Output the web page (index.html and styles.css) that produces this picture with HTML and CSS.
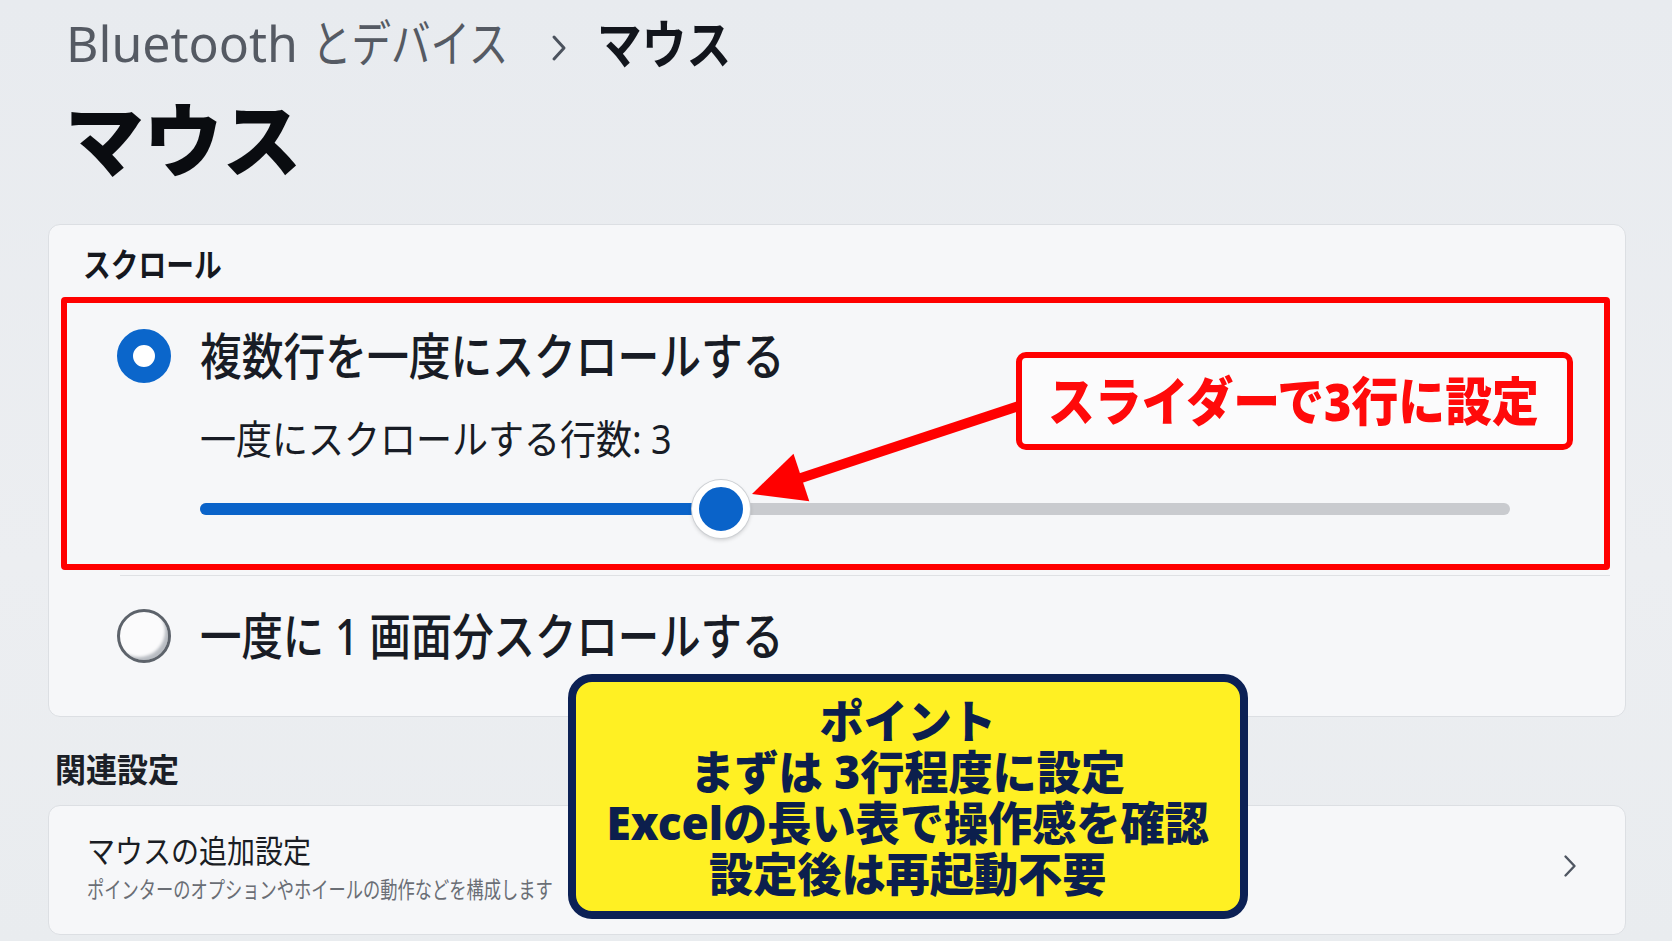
FILE: index.html
```html
<!DOCTYPE html>
<html lang="ja">
<head>
<meta charset="utf-8">
<title>マウス</title>
<link rel="stylesheet" href="styles.css">
</head>
<body>
<div class="page">
  <div class="crumb">
    <span class="crumb-en">Bluetooth</span>
    <span class="crumb-jp">とデバイス</span>
    <svg class="crumb-chev" width="16" height="28" viewBox="0 0 16 28"><path d="M3 3 L13 14 L3 25" fill="none" stroke="#4b525d" stroke-width="3" stroke-linecap="round" stroke-linejoin="round"/></svg>
    <span class="crumb-cur">マウス</span>
  </div>
  <h1 class="title"><span class="title-txt">マウス</span></h1>

  <section class="card card-scroll">
    <div class="card-head"><span class="card-head-txt">スクロール</span></div>
    <div class="hilite">
      <div class="opt">
        <span class="radio radio-on"></span>
        <span class="opt-text">複数行を一度にスクロールする</span>
      </div>
      <div class="sub"><span class="sub-txt">一度にスクロールする行数: 3</span></div>
      <div class="slider">
        <div class="track"><div class="fill"></div></div>
        <div class="thumb"></div>
      </div>
    </div>
    <div class="divider"></div>
    <div class="opt opt2">
      <span class="radio radio-off"></span>
      <span class="opt-text">一度に 1 画面分スクロールする</span>
    </div>
  </section>

  <h2 class="related"><span class="related-txt">関連設定</span></h2>
  <section class="card card-link">
    <div class="link-text">
      <div class="link-title"><span class="link-title-txt">マウスの追加設定</span></div>
      <div class="link-desc"><span class="link-desc-txt">ポインターのオプションやホイールの動作などを構成します</span></div>
    </div>
    <svg class="link-chev" width="14" height="24" viewBox="0 0 14 24"><path d="M2.5 2.5 L11.5 12 L2.5 21.5" fill="none" stroke="#4f5662" stroke-width="2.4" stroke-linecap="round" stroke-linejoin="round"/></svg>
  </section>

  <svg class="arrow" width="1672" height="941" viewBox="0 0 1672 941">
    <line x1="798" y1="479" x2="1022" y2="405" stroke="#ff0000" stroke-width="10"/>
    <polygon points="752,494 793.5,453.7 809.3,501.3" fill="#ff0000"/>
  </svg>
  <div class="note-red"><span class="note-red-txt">スライダーで3行に設定</span></div>
  <div class="note-yellow">
    <p class="ny-text">ポイント<br>まずは 3行程度に設定<br>Excelの長い表で操作感を確認<br>設定後は再起動不要</p>
  </div>
</div>
</body>
</html>
```

FILE: styles.css
```css
* { box-sizing: border-box; }
html, body {
  margin: 0;
  padding: 0;
}
body {
  width: 1672px;
  height: 941px;
  overflow: hidden;
  background: #e9ecf0;
  font-family: "Noto Sans", "Noto Sans CJK JP", sans-serif;
  color: #191d26;
}
.page {
  position: relative;
  width: 1672px;
  height: 941px;
  padding: 18px 46px 0 48px;
  background: linear-gradient(180deg, #e8ebef 0%, #eceef1 60%, #e9ecef 100%);
}

/* breadcrumb */
.crumb {
  display: flex;
  align-items: flex-start;
  height: 52px;
  padding-left: 18px;
  line-height: 1;
  white-space: nowrap;
}
.crumb-en {
  font-size: 50px;
  color: #555a63;
  margin-right: 14px;
}
.crumb-jp {
  display: inline-block;
  font-size: 50px;
  color: #555a63;
  transform: scaleX(0.79);
  transform-origin: 0 50%;
  margin-right: -10px;
}
.crumb-chev {
  margin-top: 16px;
  margin-right: 30px;
  flex: none;
}
.crumb-cur {
  display: inline-block;
  font-size: 52px;
  font-weight: 700;
  color: #12151c;
  transform: scaleX(0.86);
  transform-origin: 0 50%;
}

/* title */
.title {
  margin: 28.5px 0 0 0;
  padding-left: 17px;
  font-size: 80px;
  font-weight: 900;
  line-height: 1;
  color: #0a0c10;
}
.title-txt {
  display: inline-block;
  transform: scaleX(0.985);
  transform-origin: 0 50%;
}

/* cards */
.card {
  background: #f6f7f9;
  border: 1px solid #dcdfe3;
  border-radius: 12px;
}
.card-scroll {
  margin-top: 45.5px;
  padding: 22.5px 0 53px 0;
}
.card-head {
  padding-left: 34px;
  font-size: 33px;
  font-weight: 700;
  line-height: 1;
  height: 33px;
  color: #15181f;
}
.card-head-txt, .sub-txt, .related-txt, .link-title-txt, .link-desc-txt, .note-red-txt {
  display: inline-block;
  white-space: nowrap;
  transform-origin: 0 50%;
}
.card-head-txt { transform: scaleX(0.84); }

.hilite {
  margin: 16.5px 15px 0 12px;
  border: 6px solid #ff0000;
  border-radius: 4px;
  padding: 26px 94px 26px 50px;
}
.opt {
  display: flex;
  align-items: center;
  height: 54px;
}
.opt-text {
  display: inline-block;
  margin-left: 29px;
  font-size: 50px;
  font-weight: 500;
  line-height: 1;
  white-space: nowrap;
  color: #181c25;
  transform: scaleX(0.835);
  transform-origin: 0 50%;
}
.opt2 .opt-text { transform: scaleX(0.828); }
.radio {
  flex: none;
  width: 54px;
  height: 54px;
  border-radius: 50%;
}
.radio-on {
  border: 16.5px solid #0b66cb;
  background: #ffffff;
}
.radio-off {
  border: 3px solid #5d636b;
  background: #fbfbfc;
  box-shadow: inset -5px -5px 3px -2px #b9bdc3;
}
.sub {
  margin-top: 35.8px;
  padding-left: 83px;
  font-size: 40px;
  line-height: 1;
  height: 40px;
  color: #181c25;
}
.sub-txt { transform: scaleX(0.9); }

.slider {
  position: relative;
  margin: 21.2px 0 0 83px;
  height: 58px;
  display: flex;
  align-items: center;
}
.track {
  flex: 1;
  height: 12px;
  border-radius: 6px;
  background: #c9cbcf;
  overflow: hidden;
}
.fill {
  width: 521px;
  height: 100%;
  background: #0a63c9;
}
.thumb {
  position: absolute;
  left: 492px;
  top: 0;
  width: 58px;
  height: 58px;
  border-radius: 50%;
  background: #0a63c9;
  border: 7px solid #ffffff;
  box-shadow: 0 0 0 1px #cdd0d4, 0 2px 4px rgba(0, 0, 0, 0.18);
}

.divider {
  margin: 5px 15px 0 71px;
  height: 1px;
  background: #dfe1e4;
}
.opt2 {
  margin-top: 33px;
  padding-left: 68px;
}

/* related */
.related {
  margin: 36.5px 0 18.5px 0;
  padding-left: 7px;
  font-size: 33px;
  font-weight: 700;
  line-height: 1;
  height: 33px;
  color: #1b1f27;
}
.related-txt { transform: scaleX(0.94); }

.card-link {
  display: flex;
  align-items: center;
  justify-content: space-between;
  padding: 28.6px 48px 33.4px 38px;
}
.link-title {
  font-size: 32px;
  line-height: 1;
  height: 32px;
  color: #1a1d24;
}
.link-title-txt { transform: scaleX(0.875); }
.link-desc {
  margin-top: 11px;
  font-size: 23px;
  line-height: 1;
  height: 23px;
  color: #6a6e75;
}
.link-desc-txt { transform: scaleX(0.75); }
.link-chev { flex: none; margin-top: -4px; }

/* annotations */
.arrow {
  position: absolute;
  left: 0;
  top: 0;
  pointer-events: none;
}
.note-red {
  position: absolute;
  left: 1016px;
  top: 352px;
  width: 557px;
  height: 98px;
  border: 6px solid #ff0000;
  border-radius: 10px;
  background: #fbfbfc;
  display: flex;
  align-items: center;
  padding-left: 26px;
  font-size: 52px;
  font-weight: 900;
  line-height: 1;
  color: #ff0a0a;
}
.note-red-txt { transform: scaleX(0.9); }

.note-yellow {
  position: absolute;
  left: 568px;
  top: 674px;
  width: 680px;
  height: 245px;
  border: 8.5px solid #0c2155;
  border-radius: 24px;
  background: #fff023;
  display: flex;
  align-items: center;
  justify-content: center;
  color: #0c1f4d;
  font-weight: 900;
}
.ny-text {
  margin: 0;
  white-space: nowrap;
  text-align: center;
  font-size: 46px;
  line-height: 51px;
  transform: scaleX(0.96);
}
```
